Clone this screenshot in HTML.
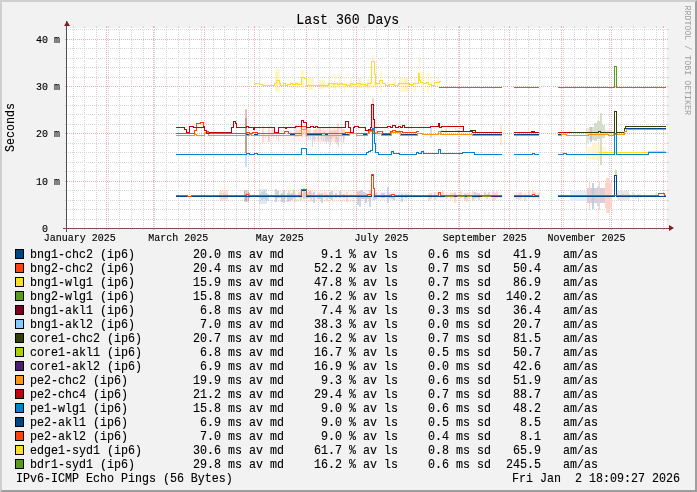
<!DOCTYPE html>
<html><head><meta charset="utf-8"><style>html,body{margin:0;padding:0;width:697px;height:492px;overflow:hidden;background:#F2F2F2}svg{display:block;will-change:transform}</style></head><body>
<svg width="697" height="492" viewBox="0 0 697 492" shape-rendering="crispEdges">
<rect x="0" y="0" width="697" height="492" fill="#F2F2F2"/>
<rect x="0" y="0" width="697" height="2" fill="#CFCFCF"/>
<rect x="0" y="0" width="2" height="492" fill="#CFCFCF"/>
<path d="M0 492L2 490H695V2L697 0V492Z" fill="#9E9E9E" shape-rendering="auto"/>
<rect x="67" y="28" width="600" height="200" fill="#FFFFFF"/>
<path d="M73.5 26V28M73.5 228V230M84.5 26V28M84.5 228V230M96.5 26V28M96.5 228V230M108.5 26V28M108.5 228V230M119.5 26V28M119.5 228V230M131.5 26V28M131.5 228V230M143.5 26V28M143.5 228V230M154.5 26V28M154.5 228V230M166.5 26V28M166.5 228V230M178.5 26V28M178.5 228V230M189.5 26V28M189.5 228V230M201.5 26V28M201.5 228V230M213.5 26V28M213.5 228V230M224.5 26V28M224.5 228V230M236.5 26V28M236.5 228V230M248.5 26V28M248.5 228V230M259.5 26V28M259.5 228V230M271.5 26V28M271.5 228V230M283.5 26V28M283.5 228V230M294.5 26V28M294.5 228V230M306.5 26V28M306.5 228V230M318.5 26V28M318.5 228V230M329.5 26V28M329.5 228V230M341.5 26V28M341.5 228V230M353.5 26V28M353.5 228V230M364.5 26V28M364.5 228V230M376.5 26V28M376.5 228V230M388.5 26V28M388.5 228V230M399.5 26V28M399.5 228V230M411.5 26V28M411.5 228V230M423.5 26V28M423.5 228V230M434.5 26V28M434.5 228V230M446.5 26V28M446.5 228V230M458.5 26V28M458.5 228V230M469.5 26V28M469.5 228V230M481.5 26V28M481.5 228V230M493.5 26V28M493.5 228V230M504.5 26V28M504.5 228V230M516.5 26V28M516.5 228V230M528.5 26V28M528.5 228V230M539.5 26V28M539.5 228V230M551.5 26V28M551.5 228V230M563.5 26V28M563.5 228V230M574.5 26V28M574.5 228V230M586.5 26V28M586.5 228V230M598.5 26V28M598.5 228V230M609.5 26V28M609.5 228V230M621.5 26V28M621.5 228V230M633.5 26V28M633.5 228V230M644.5 26V28M644.5 228V230M656.5 26V28M656.5 228V230" stroke="#D6D6D6" stroke-width="1" fill="none"/>
<path d="M73.5 30V228M84.5 30V228M96.5 30V228M108.5 30V228M119.5 30V228M131.5 30V228M143.5 30V228M154.5 30V228M166.5 30V228M178.5 30V228M189.5 30V228M201.5 30V228M213.5 30V228M224.5 30V228M236.5 30V228M248.5 30V228M259.5 30V228M271.5 30V228M283.5 30V228M294.5 30V228M306.5 30V228M318.5 30V228M329.5 30V228M341.5 30V228M353.5 30V228M364.5 30V228M376.5 30V228M388.5 30V228M399.5 30V228M411.5 30V228M423.5 30V228M434.5 30V228M446.5 30V228M458.5 30V228M469.5 30V228M481.5 30V228M493.5 30V228M504.5 30V228M516.5 30V228M528.5 30V228M539.5 30V228M551.5 30V228M563.5 30V228M574.5 30V228M586.5 30V228M598.5 30V228M609.5 30V228M621.5 30V228M633.5 30V228M644.5 30V228M656.5 30V228" stroke="#D6D6D6" stroke-width="1" fill="none" stroke-dasharray="1 1"/>
<path d="M65 219.5H67M667 219.5H669M65 209.5H67M667 209.5H669M65 200.5H67M667 200.5H669M65 190.5H67M667 190.5H669M65 171.5H67M667 171.5H669M65 162.5H67M667 162.5H669M65 152.5H67M667 152.5H669M65 143.5H67M667 143.5H669M65 124.5H67M667 124.5H669M65 114.5H67M667 114.5H669M65 105.5H67M667 105.5H669M65 96.5H67M667 96.5H669M65 77.5H67M667 77.5H669M65 67.5H67M667 67.5H669M65 58.5H67M667 58.5H669M65 48.5H67M667 48.5H669M65 29.5H67M667 29.5H669" stroke="#D6D6D6" stroke-width="1" fill="none"/>
<path d="M68 219.5H667M68 209.5H667M68 200.5H667M68 190.5H667M68 171.5H667M68 162.5H667M68 152.5H667M68 143.5H667M68 124.5H667M68 114.5H667M68 105.5H667M68 96.5H667M68 77.5H667M68 67.5H667M68 58.5H667M68 48.5H667M68 29.5H667" stroke="#D6D6D6" stroke-width="1" fill="none" stroke-dasharray="1 1"/>
<path d="M106.5 26V28M106.5 228V230M153.5 26V28M153.5 228V230M204.5 26V28M204.5 228V230M254.5 26V28M254.5 228V230M306.5 26V28M306.5 228V230M356.5 26V28M356.5 228V230M408.5 26V28M408.5 228V230M459.5 26V28M459.5 228V230M509.5 26V28M509.5 228V230M561.5 26V28M561.5 228V230M611.5 26V28M611.5 228V230M663.5 26V28M663.5 228V230" stroke="#EFB0B0" stroke-width="1" fill="none"/>
<path d="M106.5 30V228M153.5 30V228M204.5 30V228M254.5 30V228M306.5 30V228M356.5 30V228M408.5 30V228M459.5 30V228M509.5 30V228M561.5 30V228M611.5 30V228M663.5 30V228" stroke="#EFB0B0" stroke-width="1" fill="none" stroke-dasharray="1 1"/>
<path d="M65 181.5H669M65 133.5H669M65 86.5H669M65 39.5H669" stroke="#EFB0B0" stroke-width="1" fill="none" stroke-dasharray="1 1"/>
<g id="data"><rect x="275" y="69" width="5" height="23" fill="#FFE870" fill-opacity="0.35"/>
<rect x="276" y="72" width="2" height="18" fill="#FFE870" fill-opacity="0.35"/>
<rect x="290" y="82" width="10" height="6" fill="#FFE870" fill-opacity="0.35"/>
<rect x="301" y="70" width="3" height="18" fill="#FFE870" fill-opacity="0.35"/>
<rect x="308" y="78" width="6" height="12" fill="#FFE870" fill-opacity="0.35"/>
<rect x="319" y="80" width="6" height="9" fill="#FFE870" fill-opacity="0.35"/>
<rect x="320" y="83" width="60" height="5" fill="#FFE870" fill-opacity="0.35"/>
<rect x="328" y="78" width="2" height="10" fill="#FFE870" fill-opacity="0.35"/>
<rect x="334" y="74" width="2" height="16" fill="#FFE870" fill-opacity="0.35"/>
<rect x="339" y="73" width="2" height="16" fill="#FFE870" fill-opacity="0.35"/>
<rect x="344" y="77" width="1" height="15" fill="#FFE870" fill-opacity="0.35"/>
<rect x="350" y="77" width="2" height="11" fill="#FFE870" fill-opacity="0.35"/>
<rect x="358" y="78" width="4" height="10" fill="#FFE870" fill-opacity="0.35"/>
<rect x="367" y="79" width="2" height="11" fill="#FFE870" fill-opacity="0.35"/>
<rect x="372" y="55" width="2" height="7" fill="#FFE870" fill-opacity="0.35"/>
<rect x="380" y="71" width="2" height="21" fill="#FFE870" fill-opacity="0.35"/>
<rect x="394" y="78" width="2" height="8" fill="#FFE870" fill-opacity="0.35"/>
<rect x="400" y="78" width="8" height="14" fill="#FFE870" fill-opacity="0.35"/>
<rect x="405" y="77" width="2" height="13" fill="#FFE870" fill-opacity="0.35"/>
<rect x="414" y="77" width="2" height="15" fill="#FFE870" fill-opacity="0.35"/>
<rect x="419" y="55" width="1" height="25" fill="#FFE870" fill-opacity="0.35"/>
<rect x="421" y="71" width="3" height="19" fill="#FFE870" fill-opacity="0.35"/>
<rect x="427" y="73" width="2" height="20" fill="#FFE870" fill-opacity="0.35"/>
<rect x="431" y="74" width="1" height="21" fill="#FFE870" fill-opacity="0.35"/>
<rect x="437" y="77" width="2" height="9" fill="#FFE870" fill-opacity="0.35"/>
<rect x="198" y="135.6" width="1" height="2.6" fill="#FFD8B0" fill-opacity="0.35"/>
<rect x="199" y="135.8" width="1" height="1.3" fill="#FFD8B0" fill-opacity="0.35"/>
<rect x="201" y="135.4" width="1" height="2.4" fill="#FFD8B0" fill-opacity="0.35"/>
<rect x="207" y="135.4" width="1" height="1.5" fill="#FFD8B0" fill-opacity="0.35"/>
<rect x="209" y="135.4" width="1" height="3.7" fill="#FFD8B0" fill-opacity="0.35"/>
<rect x="210" y="135.4" width="1" height="4.9" fill="#FFD8B0" fill-opacity="0.35"/>
<rect x="211" y="135.8" width="1" height="3.9" fill="#FFD8B0" fill-opacity="0.35"/>
<rect x="213" y="135.7" width="1" height="1.8" fill="#FFD8B0" fill-opacity="0.35"/>
<rect x="262" y="130" width="83" height="12" fill="#FFB8A8" fill-opacity="0.15"/>
<rect x="262" y="126.2" width="2" height="16.9" fill="#FFB8A8" fill-opacity="0.45"/>
<rect x="268" y="125.9" width="2" height="15.7" fill="#FFB8A8" fill-opacity="0.45"/>
<rect x="272" y="127.3" width="2" height="8.1" fill="#FFB8A8" fill-opacity="0.45"/>
<rect x="265" y="134.9" width="1" height="3.0" fill="#A8C0DC" fill-opacity="0.45"/>
<rect x="268" y="135.3" width="1" height="5.3" fill="#A8C0DC" fill-opacity="0.45"/>
<rect x="273" y="135.6" width="1" height="2.1" fill="#A8C0DC" fill-opacity="0.45"/>
<rect x="276" y="135.5" width="1" height="3.7" fill="#A8C0DC" fill-opacity="0.45"/>
<rect x="278" y="135.3" width="1" height="5.4" fill="#A8C0DC" fill-opacity="0.45"/>
<rect x="316" y="128" width="26" height="14" fill="#FFB8A8" fill-opacity="0.25"/>
<rect x="295" y="124.9" width="2" height="12.2" fill="#FFB8A8" fill-opacity="0.5"/>
<rect x="297" y="129.5" width="2" height="7.9" fill="#FFB8A8" fill-opacity="0.5"/>
<rect x="299" y="129.5" width="2" height="6.0" fill="#FFB8A8" fill-opacity="0.5"/>
<rect x="301" y="130.6" width="2" height="6.7" fill="#FFB8A8" fill-opacity="0.5"/>
<rect x="303" y="126.8" width="2" height="8.0" fill="#FFB8A8" fill-opacity="0.5"/>
<rect x="305" y="125.7" width="2" height="11.4" fill="#FFB8A8" fill-opacity="0.5"/>
<rect x="307" y="130.2" width="2" height="6.3" fill="#FFB8A8" fill-opacity="0.5"/>
<rect x="309" y="129.4" width="2" height="6.1" fill="#FFB8A8" fill-opacity="0.5"/>
<rect x="313" y="130.1" width="2" height="5.3" fill="#FFB8A8" fill-opacity="0.5"/>
<rect x="315" y="128.7" width="2" height="7.2" fill="#FFB8A8" fill-opacity="0.5"/>
<rect x="319" y="127.1" width="2" height="9.3" fill="#FFB8A8" fill-opacity="0.5"/>
<rect x="323" y="130.9" width="2" height="5.8" fill="#FFB8A8" fill-opacity="0.5"/>
<rect x="329" y="129.9" width="2" height="9.3" fill="#FFB8A8" fill-opacity="0.5"/>
<rect x="331" y="130.9" width="2" height="8.2" fill="#FFB8A8" fill-opacity="0.5"/>
<rect x="333" y="129.8" width="2" height="7.6" fill="#FFB8A8" fill-opacity="0.5"/>
<rect x="335" y="130.3" width="2" height="12.6" fill="#FFB8A8" fill-opacity="0.5"/>
<rect x="337" y="123.1" width="2" height="13.0" fill="#FFB8A8" fill-opacity="0.5"/>
<rect x="341" y="129.4" width="2" height="6.4" fill="#FFB8A8" fill-opacity="0.5"/>
<rect x="343" y="129.0" width="2" height="9.5" fill="#FFB8A8" fill-opacity="0.5"/>
<rect x="306" y="135.7" width="1" height="5.2" fill="#A8C0DC" fill-opacity="0.5"/>
<rect x="308" y="134.7" width="1" height="5.6" fill="#A8C0DC" fill-opacity="0.5"/>
<rect x="310" y="135.4" width="1" height="4.8" fill="#A8C0DC" fill-opacity="0.5"/>
<rect x="312" y="134.9" width="1" height="11.7" fill="#A8C0DC" fill-opacity="0.5"/>
<rect x="313" y="135.5" width="1" height="4.0" fill="#A8C0DC" fill-opacity="0.5"/>
<rect x="314" y="135.9" width="1" height="6.4" fill="#A8C0DC" fill-opacity="0.5"/>
<rect x="315" y="136.5" width="1" height="2.8" fill="#A8C0DC" fill-opacity="0.5"/>
<rect x="318" y="136.0" width="1" height="4.3" fill="#A8C0DC" fill-opacity="0.5"/>
<rect x="321" y="136.4" width="1" height="3.6" fill="#A8C0DC" fill-opacity="0.5"/>
<rect x="323" y="136.5" width="1" height="4.7" fill="#A8C0DC" fill-opacity="0.5"/>
<rect x="325" y="135.1" width="1" height="5.9" fill="#A8C0DC" fill-opacity="0.5"/>
<rect x="326" y="135.6" width="1" height="8.1" fill="#A8C0DC" fill-opacity="0.5"/>
<rect x="327" y="135.8" width="1" height="4.0" fill="#A8C0DC" fill-opacity="0.5"/>
<rect x="328" y="134.6" width="1" height="7.2" fill="#A8C0DC" fill-opacity="0.5"/>
<rect x="330" y="136.2" width="1" height="9.8" fill="#A8C0DC" fill-opacity="0.5"/>
<rect x="336" y="136.1" width="1" height="4.3" fill="#A8C0DC" fill-opacity="0.5"/>
<rect x="337" y="136.5" width="1" height="8.3" fill="#A8C0DC" fill-opacity="0.5"/>
<rect x="338" y="135.5" width="1" height="11.1" fill="#A8C0DC" fill-opacity="0.5"/>
<rect x="343" y="135.3" width="1" height="7.4" fill="#A8C0DC" fill-opacity="0.5"/>
<rect x="377" y="131.4" width="1" height="4.8" fill="#FFB8A8" fill-opacity="0.4"/>
<rect x="378" y="131.5" width="1" height="4.6" fill="#FFB8A8" fill-opacity="0.4"/>
<rect x="379" y="131.4" width="1" height="3.1" fill="#FFB8A8" fill-opacity="0.4"/>
<rect x="382" y="130.3" width="1" height="6.0" fill="#FFB8A8" fill-opacity="0.4"/>
<rect x="385" y="129.8" width="1" height="4.2" fill="#FFB8A8" fill-opacity="0.4"/>
<rect x="389" y="130.4" width="1" height="3.8" fill="#FFB8A8" fill-opacity="0.4"/>
<rect x="440" y="129.9" width="1" height="2.9" fill="#C8D8B0" fill-opacity="0.5"/>
<rect x="441" y="128.6" width="1" height="4.4" fill="#C8D8B0" fill-opacity="0.5"/>
<rect x="442" y="130.1" width="1" height="1.8" fill="#C8D8B0" fill-opacity="0.5"/>
<rect x="443" y="129.7" width="1" height="2.6" fill="#C8D8B0" fill-opacity="0.5"/>
<rect x="445" y="129.0" width="1" height="4.2" fill="#C8D8B0" fill-opacity="0.5"/>
<rect x="446" y="129.1" width="1" height="3.7" fill="#C8D8B0" fill-opacity="0.5"/>
<rect x="449" y="130.0" width="1" height="2.7" fill="#C8D8B0" fill-opacity="0.5"/>
<rect x="452" y="130.0" width="1" height="1.7" fill="#C8D8B0" fill-opacity="0.5"/>
<rect x="455" y="128.1" width="1" height="4.0" fill="#C8D8B0" fill-opacity="0.5"/>
<rect x="456" y="129.8" width="1" height="1.9" fill="#C8D8B0" fill-opacity="0.5"/>
<rect x="457" y="129.2" width="1" height="2.6" fill="#C8D8B0" fill-opacity="0.5"/>
<rect x="458" y="129.8" width="1" height="3.3" fill="#C8D8B0" fill-opacity="0.5"/>
<rect x="459" y="130.1" width="1" height="2.1" fill="#C8D8B0" fill-opacity="0.5"/>
<rect x="462" y="127.6" width="1" height="5.3" fill="#C8D8B0" fill-opacity="0.5"/>
<rect x="586" y="128" width="3" height="15" fill="#D4D8C8" fill-opacity="0.6"/>
<rect x="589" y="126.5" width="5" height="13.5" fill="#D4D8C8" fill-opacity="0.85"/>
<rect x="594" y="122.5" width="3" height="18.5" fill="#D4D8C8" fill-opacity="0.9"/>
<rect x="597" y="120.7" width="3" height="18.299999999999997" fill="#D4D8C8" fill-opacity="0.9"/>
<rect x="600" y="113" width="2" height="52" fill="#D4D8C8" fill-opacity="0.9"/>
<rect x="602" y="125" width="3" height="13" fill="#D4D8C8" fill-opacity="0.85"/>
<rect x="605" y="130" width="7" height="4" fill="#D4D8C8" fill-opacity="0.5"/>
<rect x="590" y="127" width="2" height="15" fill="#B0C0D0" fill-opacity="0.7"/>
<rect x="500" y="125" width="2" height="20" fill="#FF950E" fill-opacity="0.2"/>
<rect x="245" y="109" width="2" height="9" fill="#C5000B" fill-opacity="0.25"/>
<rect x="245" y="118" width="2" height="35" fill="#906050" fill-opacity="0.6"/>
<rect x="245" y="155" width="2" height="12" fill="#83CAFF" fill-opacity="0.5"/>
<rect x="430" y="128" width="2" height="10" fill="#83CAFF" fill-opacity="0.5"/>
<rect x="372" y="98" width="2" height="32" fill="#FFC0C0" fill-opacity="0.7"/>
<rect x="586" y="147" width="6" height="12" fill="#FFF0B0" fill-opacity="0.5"/>
<rect x="592" y="143" width="8" height="17" fill="#FFF0B0" fill-opacity="0.6"/>
<rect x="602" y="147" width="4" height="11" fill="#FFF0B0" fill-opacity="0.5"/>
<rect x="606" y="150" width="6" height="6" fill="#FFF0B0" fill-opacity="0.35"/>
<rect x="320" y="153.0" width="1" height="3.1" fill="#A8C0DC" fill-opacity="0.35"/>
<rect x="325" y="153.4" width="1" height="2.9" fill="#A8C0DC" fill-opacity="0.35"/>
<rect x="327" y="153.0" width="1" height="2.0" fill="#A8C0DC" fill-opacity="0.35"/>
<rect x="329" y="152.8" width="1" height="2.4" fill="#A8C0DC" fill-opacity="0.35"/>
<rect x="334" y="153.7" width="1" height="2.6" fill="#A8C0DC" fill-opacity="0.35"/>
<rect x="337" y="153.5" width="1" height="2.5" fill="#A8C0DC" fill-opacity="0.35"/>
<rect x="339" y="153.0" width="1" height="2.0" fill="#A8C0DC" fill-opacity="0.35"/>
<rect x="342" y="153.0" width="1" height="1.8" fill="#A8C0DC" fill-opacity="0.35"/>
<rect x="343" y="152.7" width="1" height="2.0" fill="#A8C0DC" fill-opacity="0.35"/>
<rect x="220" y="190" width="8" height="11" fill="#FFB8A8" fill-opacity="0.4"/>
<rect x="219" y="191.3" width="1" height="6.7" fill="#FFB8A8" fill-opacity="0.5"/>
<rect x="220" y="194.4" width="1" height="3.6" fill="#FFB8A8" fill-opacity="0.5"/>
<rect x="221" y="193.0" width="1" height="7.2" fill="#FFB8A8" fill-opacity="0.5"/>
<rect x="223" y="193.2" width="1" height="6.1" fill="#FFB8A8" fill-opacity="0.5"/>
<rect x="224" y="193.9" width="1" height="4.2" fill="#FFB8A8" fill-opacity="0.5"/>
<rect x="225" y="194.4" width="1" height="4.4" fill="#FFB8A8" fill-opacity="0.5"/>
<rect x="226" y="194.1" width="1" height="3.6" fill="#FFB8A8" fill-opacity="0.5"/>
<rect x="227" y="192.9" width="1" height="6.0" fill="#FFB8A8" fill-opacity="0.5"/>
<rect x="244" y="190" width="5" height="12" fill="#C8A8B0" fill-opacity="0.5"/>
<rect x="244" y="191.1" width="1" height="6.2" fill="#B89090" fill-opacity="0.6"/>
<rect x="245" y="194.3" width="1" height="6.2" fill="#B89090" fill-opacity="0.6"/>
<rect x="246" y="192.8" width="1" height="7.9" fill="#B89090" fill-opacity="0.6"/>
<rect x="248" y="192.1" width="1" height="8.9" fill="#B89090" fill-opacity="0.6"/>
<rect x="249" y="193.2" width="1" height="4.8" fill="#B89090" fill-opacity="0.6"/>
<rect x="259" y="189" width="8" height="15" fill="#A8C0DC" fill-opacity="0.35"/>
<rect x="259" y="194.3" width="2" height="3.9" fill="#A8C0DC" fill-opacity="0.5"/>
<rect x="261" y="192.4" width="2" height="7.7" fill="#A8C0DC" fill-opacity="0.5"/>
<rect x="263" y="190.8" width="2" height="7.8" fill="#A8C0DC" fill-opacity="0.5"/>
<rect x="265" y="193.4" width="2" height="6.5" fill="#A8C0DC" fill-opacity="0.5"/>
<rect x="267" y="194.3" width="2" height="6.4" fill="#A8C0DC" fill-opacity="0.5"/>
<rect x="274" y="190" width="96" height="12" fill="#FFB8A8" fill-opacity="0.2"/>
<rect x="274" y="194.7" width="2" height="2.8" fill="#FFB8A8" fill-opacity="0.45"/>
<rect x="276" y="194.9" width="2" height="2.6" fill="#FFB8A8" fill-opacity="0.45"/>
<rect x="278" y="194.6" width="2" height="3.7" fill="#FFB8A8" fill-opacity="0.45"/>
<rect x="280" y="194.0" width="2" height="3.7" fill="#FFB8A8" fill-opacity="0.45"/>
<rect x="282" y="194.6" width="2" height="3.0" fill="#FFB8A8" fill-opacity="0.45"/>
<rect x="284" y="194.9" width="2" height="4.4" fill="#FFB8A8" fill-opacity="0.45"/>
<rect x="288" y="191.4" width="2" height="6.0" fill="#FFB8A8" fill-opacity="0.45"/>
<rect x="294" y="194.4" width="2" height="7.2" fill="#FFB8A8" fill-opacity="0.45"/>
<rect x="296" y="194.9" width="2" height="2.3" fill="#FFB8A8" fill-opacity="0.45"/>
<rect x="298" y="192.2" width="2" height="5.8" fill="#FFB8A8" fill-opacity="0.45"/>
<rect x="275" y="188.9" width="2" height="13.3" fill="#A8C0DC" fill-opacity="0.6"/>
<rect x="277" y="190.8" width="2" height="7.2" fill="#A8C0DC" fill-opacity="0.6"/>
<rect x="281" y="193.3" width="2" height="9.0" fill="#A8C0DC" fill-opacity="0.6"/>
<rect x="283" y="190.1" width="2" height="12.9" fill="#A8C0DC" fill-opacity="0.6"/>
<rect x="287" y="193.4" width="2" height="8.8" fill="#A8C0DC" fill-opacity="0.6"/>
<rect x="289" y="193.6" width="2" height="7.5" fill="#A8C0DC" fill-opacity="0.6"/>
<rect x="291" y="193.2" width="2" height="7.0" fill="#A8C0DC" fill-opacity="0.6"/>
<rect x="293" y="190.1" width="2" height="7.9" fill="#A8C0DC" fill-opacity="0.6"/>
<rect x="303" y="188.4" width="2" height="10.4" fill="#A8C0DC" fill-opacity="0.6"/>
<rect x="305" y="192.4" width="2" height="6.0" fill="#A8C0DC" fill-opacity="0.6"/>
<rect x="307" y="193.8" width="2" height="4.2" fill="#A8C0DC" fill-opacity="0.6"/>
<rect x="309" y="191.3" width="2" height="6.6" fill="#A8C0DC" fill-opacity="0.6"/>
<rect x="313" y="192.3" width="2" height="10.3" fill="#A8C0DC" fill-opacity="0.6"/>
<rect x="317" y="194.1" width="2" height="4.5" fill="#A8C0DC" fill-opacity="0.6"/>
<rect x="319" y="193.5" width="2" height="5.4" fill="#A8C0DC" fill-opacity="0.6"/>
<rect x="321" y="193.2" width="2" height="10.0" fill="#A8C0DC" fill-opacity="0.6"/>
<rect x="329" y="191.9" width="2" height="6.7" fill="#A8C0DC" fill-opacity="0.6"/>
<rect x="331" y="190.9" width="2" height="9.1" fill="#A8C0DC" fill-opacity="0.6"/>
<rect x="335" y="193.3" width="2" height="5.0" fill="#A8C0DC" fill-opacity="0.6"/>
<rect x="339" y="191.2" width="2" height="7.1" fill="#A8C0DC" fill-opacity="0.6"/>
<rect x="343" y="193.5" width="2" height="4.6" fill="#A8C0DC" fill-opacity="0.6"/>
<rect x="357" y="192.3" width="2" height="13.0" fill="#A8C0DC" fill-opacity="0.6"/>
<rect x="359" y="190.7" width="2" height="15.9" fill="#A8C0DC" fill-opacity="0.6"/>
<rect x="361" y="189.9" width="2" height="8.6" fill="#A8C0DC" fill-opacity="0.6"/>
<rect x="363" y="192.1" width="2" height="6.4" fill="#A8C0DC" fill-opacity="0.6"/>
<rect x="365" y="193.1" width="2" height="9.4" fill="#A8C0DC" fill-opacity="0.6"/>
<rect x="367" y="194.1" width="2" height="4.5" fill="#A8C0DC" fill-opacity="0.6"/>
<rect x="369" y="190.0" width="2" height="16.6" fill="#A8C0DC" fill-opacity="0.6"/>
<rect x="373" y="194.0" width="2" height="5.6" fill="#A8C0DC" fill-opacity="0.6"/>
<rect x="375" y="192.7" width="2" height="6.0" fill="#A8C0DC" fill-opacity="0.6"/>
<rect x="381" y="193.3" width="2" height="4.5" fill="#A8C0DC" fill-opacity="0.6"/>
<rect x="383" y="192.9" width="2" height="5.0" fill="#A8C0DC" fill-opacity="0.6"/>
<rect x="387" y="187.1" width="2" height="15.4" fill="#A8C0DC" fill-opacity="0.6"/>
<rect x="389" y="194.1" width="2" height="4.2" fill="#A8C0DC" fill-opacity="0.6"/>
<rect x="391" y="194.1" width="2" height="4.9" fill="#A8C0DC" fill-opacity="0.6"/>
<rect x="393" y="194.1" width="2" height="5.5" fill="#A8C0DC" fill-opacity="0.6"/>
<rect x="401" y="193.6" width="2" height="8.7" fill="#A8C0DC" fill-opacity="0.6"/>
<rect x="405" y="193.9" width="2" height="4.4" fill="#A8C0DC" fill-opacity="0.6"/>
<rect x="300" y="192.0" width="2" height="8.4" fill="#FFB8A8" fill-opacity="0.5"/>
<rect x="302" y="193.9" width="2" height="3.8" fill="#FFB8A8" fill-opacity="0.5"/>
<rect x="306" y="194.1" width="2" height="4.6" fill="#FFB8A8" fill-opacity="0.5"/>
<rect x="308" y="191.6" width="2" height="6.2" fill="#FFB8A8" fill-opacity="0.5"/>
<rect x="310" y="190.8" width="2" height="10.5" fill="#FFB8A8" fill-opacity="0.5"/>
<rect x="312" y="193.1" width="2" height="5.0" fill="#FFB8A8" fill-opacity="0.5"/>
<rect x="318" y="192.9" width="2" height="6.1" fill="#FFB8A8" fill-opacity="0.5"/>
<rect x="324" y="191.8" width="2" height="6.5" fill="#FFB8A8" fill-opacity="0.5"/>
<rect x="326" y="193.9" width="2" height="6.8" fill="#FFB8A8" fill-opacity="0.5"/>
<rect x="328" y="194.6" width="2" height="3.5" fill="#FFB8A8" fill-opacity="0.5"/>
<rect x="330" y="194.6" width="2" height="2.8" fill="#FFB8A8" fill-opacity="0.5"/>
<rect x="340" y="193.9" width="2" height="3.4" fill="#FFB8A8" fill-opacity="0.5"/>
<rect x="342" y="194.3" width="2" height="3.0" fill="#FFB8A8" fill-opacity="0.5"/>
<rect x="346" y="191.9" width="2" height="10.1" fill="#FFB8A8" fill-opacity="0.5"/>
<rect x="350" y="194.4" width="2" height="2.9" fill="#FFB8A8" fill-opacity="0.5"/>
<rect x="356" y="190.6" width="2" height="7.0" fill="#FFB8A8" fill-opacity="0.5"/>
<rect x="358" y="191.1" width="2" height="6.1" fill="#FFB8A8" fill-opacity="0.5"/>
<rect x="360" y="193.7" width="2" height="3.5" fill="#FFB8A8" fill-opacity="0.5"/>
<rect x="368" y="193.6" width="2" height="5.0" fill="#FFB8A8" fill-opacity="0.5"/>
<rect x="370" y="192" width="40" height="8" fill="#A8C0DC" fill-opacity="0.2"/>
<rect x="428" y="192" width="74" height="8" fill="#FFB8A8" fill-opacity="0.15"/>
<rect x="428" y="194.3" width="2" height="6.6" fill="#FFB8A8" fill-opacity="0.5"/>
<rect x="430" y="193.0" width="2" height="5.6" fill="#FFB8A8" fill-opacity="0.5"/>
<rect x="434" y="191.5" width="2" height="8.8" fill="#FFB8A8" fill-opacity="0.5"/>
<rect x="440" y="194.1" width="2" height="3.9" fill="#FFB8A8" fill-opacity="0.5"/>
<rect x="442" y="191.2" width="2" height="6.7" fill="#FFB8A8" fill-opacity="0.5"/>
<rect x="450" y="192.5" width="2" height="6.1" fill="#FFB8A8" fill-opacity="0.45"/>
<rect x="452" y="193.0" width="2" height="5.4" fill="#FFB8A8" fill-opacity="0.45"/>
<rect x="454" y="193.7" width="2" height="9.0" fill="#FFB8A8" fill-opacity="0.45"/>
<rect x="460" y="190.5" width="2" height="6.9" fill="#FFB8A8" fill-opacity="0.45"/>
<rect x="464" y="192.8" width="2" height="8.4" fill="#FFB8A8" fill-opacity="0.45"/>
<rect x="466" y="192.5" width="2" height="9.1" fill="#FFB8A8" fill-opacity="0.45"/>
<rect x="468" y="193.3" width="2" height="5.2" fill="#FFB8A8" fill-opacity="0.45"/>
<rect x="472" y="191.2" width="2" height="9.9" fill="#FFB8A8" fill-opacity="0.45"/>
<rect x="474" y="192.4" width="2" height="6.2" fill="#FFB8A8" fill-opacity="0.45"/>
<rect x="478" y="194.0" width="2" height="4.0" fill="#FFB8A8" fill-opacity="0.45"/>
<rect x="486" y="194.3" width="2" height="4.2" fill="#FFB8A8" fill-opacity="0.45"/>
<rect x="488" y="194.1" width="2" height="3.3" fill="#FFB8A8" fill-opacity="0.45"/>
<rect x="492" y="191.1" width="2" height="10.1" fill="#FFB8A8" fill-opacity="0.45"/>
<rect x="494" y="192.9" width="2" height="7.5" fill="#FFB8A8" fill-opacity="0.45"/>
<rect x="496" y="191.2" width="2" height="6.6" fill="#FFB8A8" fill-opacity="0.45"/>
<rect x="500" y="194.5" width="2" height="3.1" fill="#FFB8A8" fill-opacity="0.45"/>
<rect x="446" y="194.8" width="2" height="2.9" fill="#A8C0DC" fill-opacity="0.45"/>
<rect x="454" y="191.8" width="2" height="5.2" fill="#A8C0DC" fill-opacity="0.45"/>
<rect x="460" y="195.0" width="2" height="2.8" fill="#A8C0DC" fill-opacity="0.45"/>
<rect x="464" y="194.4" width="2" height="4.4" fill="#A8C0DC" fill-opacity="0.45"/>
<rect x="466" y="194.9" width="2" height="2.3" fill="#A8C0DC" fill-opacity="0.45"/>
<rect x="472" y="194.9" width="2" height="4.4" fill="#A8C0DC" fill-opacity="0.45"/>
<rect x="474" y="191.8" width="2" height="5.8" fill="#A8C0DC" fill-opacity="0.45"/>
<rect x="476" y="193.2" width="2" height="4.8" fill="#A8C0DC" fill-opacity="0.45"/>
<rect x="478" y="192.7" width="2" height="6.9" fill="#A8C0DC" fill-opacity="0.45"/>
<rect x="480" y="195.0" width="2" height="2.1" fill="#A8C0DC" fill-opacity="0.45"/>
<rect x="484" y="192.3" width="2" height="5.0" fill="#A8C0DC" fill-opacity="0.45"/>
<rect x="486" y="195.0" width="2" height="2.0" fill="#A8C0DC" fill-opacity="0.45"/>
<rect x="488" y="192.3" width="2" height="4.7" fill="#A8C0DC" fill-opacity="0.45"/>
<rect x="514" y="192" width="25" height="8" fill="#FFB8A8" fill-opacity="0.15"/>
<rect x="514" y="194.5" width="2" height="3.7" fill="#FFB8A8" fill-opacity="0.45"/>
<rect x="516" y="194.6" width="2" height="4.0" fill="#FFB8A8" fill-opacity="0.45"/>
<rect x="518" y="192.6" width="2" height="7.4" fill="#FFB8A8" fill-opacity="0.45"/>
<rect x="520" y="191.9" width="2" height="7.2" fill="#FFB8A8" fill-opacity="0.45"/>
<rect x="524" y="194.2" width="2" height="7.0" fill="#FFB8A8" fill-opacity="0.45"/>
<rect x="528" y="190.0" width="2" height="8.1" fill="#FFB8A8" fill-opacity="0.45"/>
<rect x="532" y="189.7" width="2" height="8.2" fill="#FFB8A8" fill-opacity="0.45"/>
<rect x="534" y="191.7" width="2" height="6.0" fill="#FFB8A8" fill-opacity="0.45"/>
<rect x="538" y="192.5" width="2" height="6.1" fill="#FFB8A8" fill-opacity="0.45"/>
<rect x="570" y="191" width="17" height="10" fill="#D8ECFF" fill-opacity="0.8"/>
<rect x="587" y="188" width="18" height="15" fill="#D8C8D4" fill-opacity="0.9"/>
<rect x="605" y="183" width="7" height="25" fill="#FFD0C8" fill-opacity="0.9"/>
<rect x="606" y="178" width="4" height="35" fill="#FFD0C8" fill-opacity="0.9"/>
<rect x="592" y="183" width="2" height="26" fill="#B8CCE0" fill-opacity="0.9"/>
<rect x="589" y="181" width="1" height="29" fill="#FFC8C0" fill-opacity="0.9"/>
<rect x="599" y="181" width="1" height="29" fill="#FFC8C0" fill-opacity="0.9"/>
<rect x="597" y="186" width="2" height="20" fill="#C8D4E4" fill-opacity="0.8"/>
<rect x="615" y="170" width="2" height="5" fill="#C8E090" fill-opacity="0.9"/>
<rect x="617" y="191" width="12" height="9" fill="#E8D8E0" fill-opacity="0.7"/>
<rect x="622" y="194.1" width="1" height="4.3" fill="#A8C0DC" fill-opacity="0.4"/>
<rect x="629" y="194.3" width="1" height="5.1" fill="#A8C0DC" fill-opacity="0.4"/>
<rect x="632" y="191.9" width="1" height="5.7" fill="#A8C0DC" fill-opacity="0.4"/>
<rect x="634" y="192.6" width="1" height="5.2" fill="#A8C0DC" fill-opacity="0.4"/>
<rect x="637" y="194.4" width="1" height="3.2" fill="#A8C0DC" fill-opacity="0.4"/>
<rect x="638" y="194.3" width="1" height="7.6" fill="#A8C0DC" fill-opacity="0.4"/>
<rect x="615" y="195.3" width="1" height="2.0" fill="#FFB8A8" fill-opacity="0.4"/>
<rect x="616" y="193.1" width="1" height="4.0" fill="#FFB8A8" fill-opacity="0.4"/>
<rect x="618" y="194.4" width="1" height="2.4" fill="#FFB8A8" fill-opacity="0.4"/>
<rect x="623" y="193.8" width="1" height="3.1" fill="#FFB8A8" fill-opacity="0.4"/>
<rect x="625" y="194.2" width="1" height="3.5" fill="#FFB8A8" fill-opacity="0.4"/>
<rect x="627" y="193.1" width="1" height="4.5" fill="#FFB8A8" fill-opacity="0.4"/>
<rect x="628" y="193.9" width="1" height="3.6" fill="#FFB8A8" fill-opacity="0.4"/>
<rect x="629" y="195.3" width="1" height="2.2" fill="#FFB8A8" fill-opacity="0.4"/>
<rect x="635" y="195.2" width="1" height="3.4" fill="#FFB8A8" fill-opacity="0.4"/>
<rect x="636" y="194.9" width="1" height="3.2" fill="#FFB8A8" fill-opacity="0.4"/>
<rect x="638" y="194.4" width="1" height="3.0" fill="#FFB8A8" fill-opacity="0.4"/>
<rect x="639" y="193.9" width="1" height="2.7" fill="#FFB8A8" fill-opacity="0.4"/>
<rect x="640" y="193.8" width="1" height="3.8" fill="#FFB8A8" fill-opacity="0.4"/>
<rect x="642" y="194.5" width="1" height="2.6" fill="#FFB8A8" fill-opacity="0.4"/>
<rect x="643" y="195.2" width="1" height="2.1" fill="#FFB8A8" fill-opacity="0.4"/>
<rect x="644" y="193.8" width="1" height="4.5" fill="#FFB8A8" fill-opacity="0.4"/>
<rect x="646" y="195.1" width="1" height="3.1" fill="#FFB8A8" fill-opacity="0.4"/>
<rect x="647" y="195.0" width="1" height="2.0" fill="#FFB8A8" fill-opacity="0.4"/>
<rect x="650" y="195.4" width="1" height="1.5" fill="#FFB8A8" fill-opacity="0.4"/>
<rect x="652" y="193.7" width="1" height="4.4" fill="#FFB8A8" fill-opacity="0.4"/>
<rect x="654" y="195.2" width="1" height="3.1" fill="#FFB8A8" fill-opacity="0.4"/>
<rect x="655" y="193.0" width="1" height="4.7" fill="#FFB8A8" fill-opacity="0.4"/>
<rect x="656" y="193.3" width="1" height="4.1" fill="#FFB8A8" fill-opacity="0.4"/>
<rect x="657" y="194.6" width="1" height="2.5" fill="#FFB8A8" fill-opacity="0.4"/>
<rect x="658" y="195.2" width="1" height="1.7" fill="#FFB8A8" fill-opacity="0.4"/>
<rect x="661" y="194.3" width="1" height="2.9" fill="#FFB8A8" fill-opacity="0.4"/>
<rect x="662" y="195.1" width="1" height="1.9" fill="#FFB8A8" fill-opacity="0.4"/>
<rect x="663" y="193.4" width="1" height="3.5" fill="#FFB8A8" fill-opacity="0.4"/>
<path d="M246.0 134.5H249.5M254.0 134.5H257.5M290.0 134.5H294.5M306.0 134.5H321.5M325.0 134.5H327.5M342.0 134.5H348.5M363.0 134.5H367.5M382.0 134.5H390.5M400.0 134.5H417.5M452.0 134.5H456.5M468.0 134.5H501.5M514.0 134.5H538.5M558.0 134.5H561.5M626.0 128.5H665.5" stroke="#004586" stroke-width="1.0" fill="none" stroke-linejoin="miter" stroke-linecap="square" shape-rendering="crispEdges"/>
<path d="M176.0 133.5H194.5V130.5H196.5V123.5H200.5V122.5H203.5V126.5H204.5V130.5H206.5V131.5H208.5V133.5H246.5V132.5H249.5V133.5H252.5V132.5H257.5V133.5H284.5V131.5H288.5V133.5H301.5V126.5H306.5V133.5H345.5V132.5H352.5V133.5H368.5V130.5H371.5V129.5H373.5V133.5H377.5V131.5H382.5V133.5H390.5V131.5H392.5V130.5H395.5V131.5H402.5V132.5H416.5V131.5H418.5" stroke="#FF420E" stroke-width="1.0" fill="none" stroke-linejoin="miter" stroke-linecap="square" shape-rendering="crispEdges"/>
<path d="M598.0 152.5H648.5V151.5H665.5" stroke="#FFDE20" stroke-width="1.0" fill="none" stroke-linejoin="miter" stroke-linecap="square" shape-rendering="crispEdges"/>
<path d="M440.0 131.5H470.5V130.5H475.5V132.5H501.5M514.0 132.5H531.5V131.5H534.5V132.5H538.5M558.0 132.5H598.5V131.5H600.5V132.5H614.5V111.5H616.5V132.5H624.5V128.5H625.5V126.5H665.5" stroke="#314004" stroke-width="1.0" fill="none" stroke-linejoin="miter" stroke-linecap="square" shape-rendering="crispEdges"/>
<path d="M176.0 135.5H194.5V134.5H196.5V135.5H204.5V132.5H207.5V133.5H208.5V135.5H249.5V134.5H251.5V135.5H301.5V129.5H306.5V135.5H349.5V133.5H356.5V135.5H367.5V133.5H369.5V131.5H373.5V132.5H376.5V133.5H381.5V135.5H391.5V132.5H400.5V135.5H417.5V133.5H422.5V134.5H438.5V131.5H440.5V134.5H472.5V135.5H501.5M514.0 135.5H538.5M558.0 135.5H561.5V134.5H566.5V135.5H588.5V134.5H608.5V135.5H613.5V134.5H624.5V131.5H626.5V129.5H665.5" stroke="#FF950E" stroke-width="1.0" fill="none" stroke-linejoin="miter" stroke-linecap="square" shape-rendering="crispEdges"/>
<path d="M176.0 127.5H184.5V129.5H186.5V132.5H189.5V126.5H193.5V127.5H203.5V126.5H204.5V130.5H206.5V133.5H209.5V132.5H231.5V127.5H233.5V121.5H235.5V123.5H236.5V127.5H246.5V126.5H248.5V127.5H253.5V129.5H254.5V127.5H274.5V132.5H278.5V127.5H280.5H285.5V128.5H286.5V127.5H295.5V126.5H301.5V120.5H303.5V122.5H306.5V127.5H310.5V126.5H313.5V127.5H315.5V126.5H317.5V127.5H345.5V121.5H348.5V127.5H350.5V132.5H353.5V127.5H354.5V126.5H358.5V127.5H363.5H365.5V130.5H368.5V129.5H370.5V127.5H371.5V104.5H373.5V119.5H374.5V127.5H376.5H387.5V126.5H390.5V127.5H392.5V125.5H395.5V127.5H398.5V126.5H400.5V127.5H402.5V125.5H404.5V127.5H430.5V126.5H438.5V123.5H439.5V127.5H441.5V126.5H463.5V131.5H472.5V132.5H501.5M514.0 132.5H538.5M558.0 132.5H569.5" stroke="#C5000B" stroke-width="1.0" fill="none" stroke-linejoin="miter" stroke-linecap="square" shape-rendering="crispEdges"/>
<path d="M176.0 154.5H246.5V153.5H249.5V154.5H254.5V153.5H257.5V154.5H301.5V148.5H306.5V154.5H366.5V152.5H368.5V151.5H370.5V150.5H372.5V128.5H374.5V143.5H375.5V152.5H378.5V154.5H391.5V151.5H393.5V153.5H399.5V154.5H416.5V152.5H418.5V153.5H421.5V151.5H423.5V153.5H438.5V149.5H440.5V153.5H462.5V152.5H474.5V154.5H501.5M514.0 154.5H532.5V153.5H534.5V154.5H538.5M558.0 154.5H563.5V153.5H566.5V154.5H614.5V133.5H616.5V154.5H648.5V152.5H665.5" stroke="#0084D1" stroke-width="1.0" fill="none" stroke-linejoin="miter" stroke-linecap="square" shape-rendering="crispEdges"/>
<path d="M176.0 196.5H301.5V190.5H306.5V196.5H371.5V175.5H373.5V188.5H374.5V196.5H501.5M514.0 196.5H538.5M558.0 196.5H614.5V175.5H616.5V196.5H665.5" stroke="#004586" stroke-width="1.0" fill="none" stroke-linejoin="miter" stroke-linecap="square" shape-rendering="crispEdges"/>
<path d="M445.0 196.5H450.5" stroke="#8C9A2A" stroke-width="1.0" fill="none" stroke-linejoin="miter" stroke-linecap="square" shape-rendering="crispEdges"/>
<path d="M451.0 196.5H454.5" stroke="#8C9A2A" stroke-width="1.0" fill="none" stroke-linejoin="miter" stroke-linecap="square" shape-rendering="crispEdges"/>
<path d="M454.0 196.5H457.5" stroke="#4B1F6F" stroke-width="1.0" fill="none" stroke-linejoin="miter" stroke-linecap="square" shape-rendering="crispEdges"/>
<path d="M457.0 196.5H464.5" stroke="#8C9A2A" stroke-width="1.0" fill="none" stroke-linejoin="miter" stroke-linecap="square" shape-rendering="crispEdges"/>
<path d="M467.0 196.5H471.5" stroke="#8C9A2A" stroke-width="1.0" fill="none" stroke-linejoin="miter" stroke-linecap="square" shape-rendering="crispEdges"/>
<path d="M476.0 196.5H480.5" stroke="#4B1F6F" stroke-width="1.0" fill="none" stroke-linejoin="miter" stroke-linecap="square" shape-rendering="crispEdges"/>
<path d="M482.0 196.5H490.5" stroke="#8C9A2A" stroke-width="1.0" fill="none" stroke-linejoin="miter" stroke-linecap="square" shape-rendering="crispEdges"/>
<path d="M493.0 196.5H498.5" stroke="#4B1F6F" stroke-width="1.0" fill="none" stroke-linejoin="miter" stroke-linecap="square" shape-rendering="crispEdges"/>
<path d="M176.0 195.5H187.5V196.5H191.5V195.5H246.5V194.5H248.5V195.5H301.5V189.5H306.5V195.5H367.5V194.5H371.5V174.5H373.5V188.5H374.5V195.5H391.5V194.5H394.5V195.5H438.5V192.5H440.5V195.5H501.5M514.0 195.5H532.5V194.5H534.5V195.5H538.5M558.0 195.5H614.5H658.5V193.5H664.5V195.5H665.5" stroke="#FF420E" stroke-width="1.0" fill="none" stroke-linejoin="miter" stroke-linecap="square" shape-rendering="crispEdges"/>
<path d="M254.0 84.5H255.5V83.5H259.5V84.5H262.5V85.5H274.5V83.5H276.5V80.5H279.5V83.5H280.5V85.5H283.5V83.5H285.5V85.5H287.5V84.5H290.5V83.5H292.5V84.5H295.5V83.5H297.5V84.5H301.5V77.5H304.5V78.5H306.5V85.5H320.5H323.5H328.5V83.5H333.5V84.5H334.5V83.5H337.5V84.5H339.5V83.5H342.5V84.5H346.5V85.5H350.5V83.5H352.5V84.5H356.5V83.5H360.5V84.5H365.5V85.5H367.5V83.5H370.5V82.5H371.5V61.5H374.5V74.5H375.5V84.5H376.5V83.5H379.5V80.5H382.5V83.5H385.5V85.5H389.5V84.5H394.5V85.5H398.5V83.5H405.5H409.5V84.5H411.5V85.5H412.5V84.5H413.5V83.5H418.5V73.5H419.5V80.5H420.5V82.5H423.5V83.5H426.5V82.5H428.5V84.5H431.5V85.5H434.5V82.5H439.5V81.5H440.5" stroke="#FFDE20" stroke-width="1.0" fill="none" stroke-linejoin="miter" stroke-linecap="square" shape-rendering="crispEdges"/>
<path d="M439.0 87.5H501.5M514.0 87.5H538.5M558.0 87.5H614.5V66.5H616.5V87.5H665.5" stroke="#579D1C" stroke-width="1.0" fill="none" stroke-linejoin="miter" stroke-linecap="square" shape-rendering="crispEdges"/></g>
<path d="M63 228.5H671M66.5 232V21" stroke="#505050" stroke-width="1" fill="none"/>
<path d="M669 225L669 231L674 228Z" fill="#801F1F" shape-rendering="auto"/>
<path d="M64 26L70 26L67 21Z" fill="#801F1F" shape-rendering="auto"/>
<path d="M65 228.5H669" stroke="#DE4F4F" stroke-opacity="0.6" stroke-width="1" fill="none" stroke-dasharray="1 1"/>
<g font-family="Liberation Mono"  fill="#000" stroke="#000" stroke-width="0.12" shape-rendering="auto" style="white-space:pre">
<text transform="translate(347.80 24.00) scale(1.0 1.12)" font-size="13.2" text-anchor="middle">Last 360 Days</text>
<text transform="translate(60.10 184.80) scale(1.0 1.12)" font-size="10" text-anchor="end">10 m</text>
<text transform="translate(60.10 137.39) scale(1.0 1.12)" font-size="10" text-anchor="end">20 m</text>
<text transform="translate(60.10 89.99) scale(1.0 1.12)" font-size="10" text-anchor="end">30 m</text>
<text transform="translate(60.10 42.58) scale(1.0 1.12)" font-size="10" text-anchor="end">40 m</text>
<text transform="translate(48.10 231.80) scale(1.0 1.12)" font-size="10" text-anchor="end">0</text>
<text transform="translate(79.84 241.00) scale(1.0 1.12)" font-size="10" text-anchor="middle">January 2025</text>
<text transform="translate(178.17 241.00) scale(1.0 1.12)" font-size="10" text-anchor="middle">March 2025</text>
<text transform="translate(279.84 241.00) scale(1.0 1.12)" font-size="10" text-anchor="middle">May 2025</text>
<text transform="translate(381.51 241.00) scale(1.0 1.12)" font-size="10" text-anchor="middle">July 2025</text>
<text transform="translate(484.84 241.00) scale(1.0 1.12)" font-size="10" text-anchor="middle">September 2025</text>
<text transform="translate(586.51 241.00) scale(1.0 1.12)" font-size="10" text-anchor="middle">November 2025</text>
<text transform="translate(14.30 127.50) rotate(-90) scale(1.0 1.06)" font-size="11.67" text-anchor="middle">Seconds</text>
<text transform="translate(685.00 5.50) rotate(90)" font-size="8.3" fill="#A0A0A0" stroke="none">RRDTOOL / TOBI OETIKER</text>
<rect x="15.5" y="249.5" width="8" height="9" fill="#004586" stroke="#000" stroke-width="1"/>
<text transform="translate(30.00 257.90) scale(1.0 1.12)" font-size="11.67">bng1-chc2 (ip6)</text>
<text transform="translate(221.00 257.90) scale(1.0 1.12)" font-size="11.67" text-anchor="end">20.0</text>
<text transform="translate(228.00 257.90) scale(1.0 1.12)" font-size="11.67">ms av md</text>
<text transform="translate(342.00 257.90) scale(1.0 1.12)" font-size="11.67" text-anchor="end">9.1</text>
<text transform="translate(349.00 257.90) scale(1.0 1.12)" font-size="11.67">% av ls</text>
<text transform="translate(428.00 257.90) scale(1.0 1.12)" font-size="11.67">0.6 ms sd</text>
<text transform="translate(541.00 257.90) scale(1.0 1.12)" font-size="11.67" text-anchor="end">41.9</text>
<text transform="translate(563.00 257.90) scale(1.0 1.12)" font-size="11.67">am/as</text>
<rect x="15.5" y="263.5" width="8" height="9" fill="#ff420e" stroke="#000" stroke-width="1"/>
<text transform="translate(30.00 271.90) scale(1.0 1.12)" font-size="11.67">bng2-chc2 (ip6)</text>
<text transform="translate(221.00 271.90) scale(1.0 1.12)" font-size="11.67" text-anchor="end">20.4</text>
<text transform="translate(228.00 271.90) scale(1.0 1.12)" font-size="11.67">ms av md</text>
<text transform="translate(342.00 271.90) scale(1.0 1.12)" font-size="11.67" text-anchor="end">52.2</text>
<text transform="translate(349.00 271.90) scale(1.0 1.12)" font-size="11.67">% av ls</text>
<text transform="translate(428.00 271.90) scale(1.0 1.12)" font-size="11.67">0.7 ms sd</text>
<text transform="translate(541.00 271.90) scale(1.0 1.12)" font-size="11.67" text-anchor="end">50.4</text>
<text transform="translate(563.00 271.90) scale(1.0 1.12)" font-size="11.67">am/as</text>
<rect x="15.5" y="277.5" width="8" height="9" fill="#ffde20" stroke="#000" stroke-width="1"/>
<text transform="translate(30.00 285.90) scale(1.0 1.12)" font-size="11.67">bng1-wlg1 (ip6)</text>
<text transform="translate(221.00 285.90) scale(1.0 1.12)" font-size="11.67" text-anchor="end">15.9</text>
<text transform="translate(228.00 285.90) scale(1.0 1.12)" font-size="11.67">ms av md</text>
<text transform="translate(342.00 285.90) scale(1.0 1.12)" font-size="11.67" text-anchor="end">47.8</text>
<text transform="translate(349.00 285.90) scale(1.0 1.12)" font-size="11.67">% av ls</text>
<text transform="translate(428.00 285.90) scale(1.0 1.12)" font-size="11.67">0.7 ms sd</text>
<text transform="translate(541.00 285.90) scale(1.0 1.12)" font-size="11.67" text-anchor="end">86.9</text>
<text transform="translate(563.00 285.90) scale(1.0 1.12)" font-size="11.67">am/as</text>
<rect x="15.5" y="291.5" width="8" height="9" fill="#579d1c" stroke="#000" stroke-width="1"/>
<text transform="translate(30.00 299.90) scale(1.0 1.12)" font-size="11.67">bng2-wlg1 (ip6)</text>
<text transform="translate(221.00 299.90) scale(1.0 1.12)" font-size="11.67" text-anchor="end">15.8</text>
<text transform="translate(228.00 299.90) scale(1.0 1.12)" font-size="11.67">ms av md</text>
<text transform="translate(342.00 299.90) scale(1.0 1.12)" font-size="11.67" text-anchor="end">16.2</text>
<text transform="translate(349.00 299.90) scale(1.0 1.12)" font-size="11.67">% av ls</text>
<text transform="translate(428.00 299.90) scale(1.0 1.12)" font-size="11.67">0.2 ms sd</text>
<text transform="translate(541.00 299.90) scale(1.0 1.12)" font-size="11.67" text-anchor="end">140.2</text>
<text transform="translate(563.00 299.90) scale(1.0 1.12)" font-size="11.67">am/as</text>
<rect x="15.5" y="305.5" width="8" height="9" fill="#7e0021" stroke="#000" stroke-width="1"/>
<text transform="translate(30.00 313.90) scale(1.0 1.12)" font-size="11.67">bng1-akl1 (ip6)</text>
<text transform="translate(221.00 313.90) scale(1.0 1.12)" font-size="11.67" text-anchor="end">6.8</text>
<text transform="translate(228.00 313.90) scale(1.0 1.12)" font-size="11.67">ms av md</text>
<text transform="translate(342.00 313.90) scale(1.0 1.12)" font-size="11.67" text-anchor="end">7.4</text>
<text transform="translate(349.00 313.90) scale(1.0 1.12)" font-size="11.67">% av ls</text>
<text transform="translate(428.00 313.90) scale(1.0 1.12)" font-size="11.67">0.3 ms sd</text>
<text transform="translate(541.00 313.90) scale(1.0 1.12)" font-size="11.67" text-anchor="end">36.4</text>
<text transform="translate(563.00 313.90) scale(1.0 1.12)" font-size="11.67">am/as</text>
<rect x="15.5" y="319.5" width="8" height="9" fill="#83caff" stroke="#000" stroke-width="1"/>
<text transform="translate(30.00 327.90) scale(1.0 1.12)" font-size="11.67">bng1-akl2 (ip6)</text>
<text transform="translate(221.00 327.90) scale(1.0 1.12)" font-size="11.67" text-anchor="end">7.0</text>
<text transform="translate(228.00 327.90) scale(1.0 1.12)" font-size="11.67">ms av md</text>
<text transform="translate(342.00 327.90) scale(1.0 1.12)" font-size="11.67" text-anchor="end">38.3</text>
<text transform="translate(349.00 327.90) scale(1.0 1.12)" font-size="11.67">% av ls</text>
<text transform="translate(428.00 327.90) scale(1.0 1.12)" font-size="11.67">0.0 ms sd</text>
<text transform="translate(541.00 327.90) scale(1.0 1.12)" font-size="11.67" text-anchor="end">20.7</text>
<text transform="translate(563.00 327.90) scale(1.0 1.12)" font-size="11.67">am/as</text>
<rect x="15.5" y="333.5" width="8" height="9" fill="#314004" stroke="#000" stroke-width="1"/>
<text transform="translate(30.00 341.90) scale(1.0 1.12)" font-size="11.67">core1-chc2 (ip6)</text>
<text transform="translate(221.00 341.90) scale(1.0 1.12)" font-size="11.67" text-anchor="end">20.7</text>
<text transform="translate(228.00 341.90) scale(1.0 1.12)" font-size="11.67">ms av md</text>
<text transform="translate(342.00 341.90) scale(1.0 1.12)" font-size="11.67" text-anchor="end">16.2</text>
<text transform="translate(349.00 341.90) scale(1.0 1.12)" font-size="11.67">% av ls</text>
<text transform="translate(428.00 341.90) scale(1.0 1.12)" font-size="11.67">0.7 ms sd</text>
<text transform="translate(541.00 341.90) scale(1.0 1.12)" font-size="11.67" text-anchor="end">81.5</text>
<text transform="translate(563.00 341.90) scale(1.0 1.12)" font-size="11.67">am/as</text>
<rect x="15.5" y="347.5" width="8" height="9" fill="#aecf00" stroke="#000" stroke-width="1"/>
<text transform="translate(30.00 355.90) scale(1.0 1.12)" font-size="11.67">core1-akl1 (ip6)</text>
<text transform="translate(221.00 355.90) scale(1.0 1.12)" font-size="11.67" text-anchor="end">6.8</text>
<text transform="translate(228.00 355.90) scale(1.0 1.12)" font-size="11.67">ms av md</text>
<text transform="translate(342.00 355.90) scale(1.0 1.12)" font-size="11.67" text-anchor="end">16.7</text>
<text transform="translate(349.00 355.90) scale(1.0 1.12)" font-size="11.67">% av ls</text>
<text transform="translate(428.00 355.90) scale(1.0 1.12)" font-size="11.67">0.5 ms sd</text>
<text transform="translate(541.00 355.90) scale(1.0 1.12)" font-size="11.67" text-anchor="end">50.7</text>
<text transform="translate(563.00 355.90) scale(1.0 1.12)" font-size="11.67">am/as</text>
<rect x="15.5" y="361.5" width="8" height="9" fill="#4b1f6f" stroke="#000" stroke-width="1"/>
<text transform="translate(30.00 369.90) scale(1.0 1.12)" font-size="11.67">core1-akl2 (ip6)</text>
<text transform="translate(221.00 369.90) scale(1.0 1.12)" font-size="11.67" text-anchor="end">6.9</text>
<text transform="translate(228.00 369.90) scale(1.0 1.12)" font-size="11.67">ms av md</text>
<text transform="translate(342.00 369.90) scale(1.0 1.12)" font-size="11.67" text-anchor="end">16.9</text>
<text transform="translate(349.00 369.90) scale(1.0 1.12)" font-size="11.67">% av ls</text>
<text transform="translate(428.00 369.90) scale(1.0 1.12)" font-size="11.67">0.0 ms sd</text>
<text transform="translate(541.00 369.90) scale(1.0 1.12)" font-size="11.67" text-anchor="end">42.6</text>
<text transform="translate(563.00 369.90) scale(1.0 1.12)" font-size="11.67">am/as</text>
<rect x="15.5" y="375.5" width="8" height="9" fill="#ff950e" stroke="#000" stroke-width="1"/>
<text transform="translate(30.00 383.90) scale(1.0 1.12)" font-size="11.67">pe2-chc2 (ip6)</text>
<text transform="translate(221.00 383.90) scale(1.0 1.12)" font-size="11.67" text-anchor="end">19.9</text>
<text transform="translate(228.00 383.90) scale(1.0 1.12)" font-size="11.67">ms av md</text>
<text transform="translate(342.00 383.90) scale(1.0 1.12)" font-size="11.67" text-anchor="end">9.3</text>
<text transform="translate(349.00 383.90) scale(1.0 1.12)" font-size="11.67">% av ls</text>
<text transform="translate(428.00 383.90) scale(1.0 1.12)" font-size="11.67">0.6 ms sd</text>
<text transform="translate(541.00 383.90) scale(1.0 1.12)" font-size="11.67" text-anchor="end">51.9</text>
<text transform="translate(563.00 383.90) scale(1.0 1.12)" font-size="11.67">am/as</text>
<rect x="15.5" y="389.5" width="8" height="9" fill="#c5000b" stroke="#000" stroke-width="1"/>
<text transform="translate(30.00 397.90) scale(1.0 1.12)" font-size="11.67">pe2-chc4 (ip6)</text>
<text transform="translate(221.00 397.90) scale(1.0 1.12)" font-size="11.67" text-anchor="end">21.2</text>
<text transform="translate(228.00 397.90) scale(1.0 1.12)" font-size="11.67">ms av md</text>
<text transform="translate(342.00 397.90) scale(1.0 1.12)" font-size="11.67" text-anchor="end">29.4</text>
<text transform="translate(349.00 397.90) scale(1.0 1.12)" font-size="11.67">% av ls</text>
<text transform="translate(428.00 397.90) scale(1.0 1.12)" font-size="11.67">0.7 ms sd</text>
<text transform="translate(541.00 397.90) scale(1.0 1.12)" font-size="11.67" text-anchor="end">88.7</text>
<text transform="translate(563.00 397.90) scale(1.0 1.12)" font-size="11.67">am/as</text>
<rect x="15.5" y="403.5" width="8" height="9" fill="#0084d1" stroke="#000" stroke-width="1"/>
<text transform="translate(30.00 411.90) scale(1.0 1.12)" font-size="11.67">pe1-wlg1 (ip6)</text>
<text transform="translate(221.00 411.90) scale(1.0 1.12)" font-size="11.67" text-anchor="end">15.8</text>
<text transform="translate(228.00 411.90) scale(1.0 1.12)" font-size="11.67">ms av md</text>
<text transform="translate(342.00 411.90) scale(1.0 1.12)" font-size="11.67" text-anchor="end">9.0</text>
<text transform="translate(349.00 411.90) scale(1.0 1.12)" font-size="11.67">% av ls</text>
<text transform="translate(428.00 411.90) scale(1.0 1.12)" font-size="11.67">0.6 ms sd</text>
<text transform="translate(541.00 411.90) scale(1.0 1.12)" font-size="11.67" text-anchor="end">48.2</text>
<text transform="translate(563.00 411.90) scale(1.0 1.12)" font-size="11.67">am/as</text>
<rect x="15.5" y="417.5" width="8" height="9" fill="#004586" stroke="#000" stroke-width="1"/>
<text transform="translate(30.00 425.90) scale(1.0 1.12)" font-size="11.67">pe2-akl1 (ip6)</text>
<text transform="translate(221.00 425.90) scale(1.0 1.12)" font-size="11.67" text-anchor="end">6.9</text>
<text transform="translate(228.00 425.90) scale(1.0 1.12)" font-size="11.67">ms av md</text>
<text transform="translate(342.00 425.90) scale(1.0 1.12)" font-size="11.67" text-anchor="end">9.0</text>
<text transform="translate(349.00 425.90) scale(1.0 1.12)" font-size="11.67">% av ls</text>
<text transform="translate(428.00 425.90) scale(1.0 1.12)" font-size="11.67">0.5 ms sd</text>
<text transform="translate(541.00 425.90) scale(1.0 1.12)" font-size="11.67" text-anchor="end">8.5</text>
<text transform="translate(563.00 425.90) scale(1.0 1.12)" font-size="11.67">am/as</text>
<rect x="15.5" y="431.5" width="8" height="9" fill="#ff420e" stroke="#000" stroke-width="1"/>
<text transform="translate(30.00 439.90) scale(1.0 1.12)" font-size="11.67">pe2-akl2 (ip6)</text>
<text transform="translate(221.00 439.90) scale(1.0 1.12)" font-size="11.67" text-anchor="end">7.0</text>
<text transform="translate(228.00 439.90) scale(1.0 1.12)" font-size="11.67">ms av md</text>
<text transform="translate(342.00 439.90) scale(1.0 1.12)" font-size="11.67" text-anchor="end">9.0</text>
<text transform="translate(349.00 439.90) scale(1.0 1.12)" font-size="11.67">% av ls</text>
<text transform="translate(428.00 439.90) scale(1.0 1.12)" font-size="11.67">0.4 ms sd</text>
<text transform="translate(541.00 439.90) scale(1.0 1.12)" font-size="11.67" text-anchor="end">8.1</text>
<text transform="translate(563.00 439.90) scale(1.0 1.12)" font-size="11.67">am/as</text>
<rect x="15.5" y="445.5" width="8" height="9" fill="#ffde20" stroke="#000" stroke-width="1"/>
<text transform="translate(30.00 453.90) scale(1.0 1.12)" font-size="11.67">edge1-syd1 (ip6)</text>
<text transform="translate(221.00 453.90) scale(1.0 1.12)" font-size="11.67" text-anchor="end">30.6</text>
<text transform="translate(228.00 453.90) scale(1.0 1.12)" font-size="11.67">ms av md</text>
<text transform="translate(342.00 453.90) scale(1.0 1.12)" font-size="11.67" text-anchor="end">61.7</text>
<text transform="translate(349.00 453.90) scale(1.0 1.12)" font-size="11.67">% av ls</text>
<text transform="translate(428.00 453.90) scale(1.0 1.12)" font-size="11.67">0.8 ms sd</text>
<text transform="translate(541.00 453.90) scale(1.0 1.12)" font-size="11.67" text-anchor="end">65.9</text>
<text transform="translate(563.00 453.90) scale(1.0 1.12)" font-size="11.67">am/as</text>
<rect x="15.5" y="459.5" width="8" height="9" fill="#579d1c" stroke="#000" stroke-width="1"/>
<text transform="translate(30.00 467.90) scale(1.0 1.12)" font-size="11.67">bdr1-syd1 (ip6)</text>
<text transform="translate(221.00 467.90) scale(1.0 1.12)" font-size="11.67" text-anchor="end">29.8</text>
<text transform="translate(228.00 467.90) scale(1.0 1.12)" font-size="11.67">ms av md</text>
<text transform="translate(342.00 467.90) scale(1.0 1.12)" font-size="11.67" text-anchor="end">16.2</text>
<text transform="translate(349.00 467.90) scale(1.0 1.12)" font-size="11.67">% av ls</text>
<text transform="translate(428.00 467.90) scale(1.0 1.12)" font-size="11.67">0.6 ms sd</text>
<text transform="translate(541.00 467.90) scale(1.0 1.12)" font-size="11.67" text-anchor="end">245.5</text>
<text transform="translate(563.00 467.90) scale(1.0 1.12)" font-size="11.67">am/as</text>
<text transform="translate(16.00 481.90) scale(1.0 1.12)" font-size="11.67">IPv6-ICMP Echo Pings (56 Bytes)</text>
<text transform="translate(512.00 481.90) scale(1.0 1.12)" font-size="11.67">Fri Jan&#160; 2 18:09:27 2026</text>
</g>
</svg>
</body></html>
